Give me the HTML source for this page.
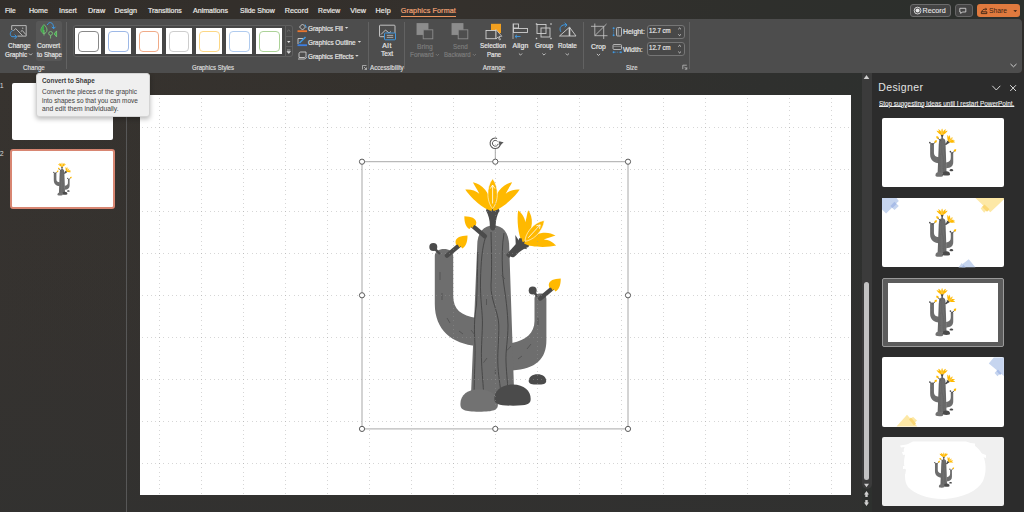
<!DOCTYPE html>
<html><head><meta charset="utf-8"><style>
*{margin:0;padding:0;box-sizing:border-box}
html,body{width:1024px;height:512px;overflow:hidden;background:#2e2c2a;font-family:"Liberation Sans",sans-serif}
.a{position:absolute}
.t{position:absolute;white-space:nowrap;line-height:1;font-family:"Liberation Sans",sans-serif;-webkit-text-stroke:0.2px currentColor}
svg{position:absolute;overflow:visible}
</style></head><body>

<div class='a' style='left:0;top:0;width:1024px;height:19px;background:linear-gradient(90deg,#322e2a 0%,#34302c 45%,#2e2f2c 75%,#2b2f2c 100%)'></div>
<div class='a' style='left:401px;top:16px;width:54.5px;height:1.2px;background:#e9935e'></div>
<div class='a' style='left:909.75px;top:4px;width:41.25px;height:13px;border:1px solid #6c6c6c;border-radius:3px;background:#444'></div>
<div class='a' style='left:955px;top:4px;width:17.5px;height:13px;border:1px solid #666;border-radius:3px;background:#444'></div>
<div class='a' style='left:977px;top:4px;width:43px;height:13px;border-radius:3px;background:#e07a3e'></div>
<div class='a' style='left:0;top:72.5px;width:1024px;height:440px;background:linear-gradient(90deg,#37332f 0%,#34312d 40%,#2f302e 75%,#2b302e 100%)'></div>
<div class='a' style='left:0;top:72.5px;width:862px;height:440px;background:linear-gradient(180deg,rgba(50,49,48,0) 0%,rgba(50,49,48,0.4) 60%,rgba(49,49,48,0.8) 100%)'></div>
<div class='a' style='left:0;top:19px;width:1021.6px;height:53.5px;background:#4d4d4d;border-radius:0 4px 4px 0'></div>
<div class='a' style='left:125.6px;top:72.5px;width:1.8px;height:440px;background:#575757'></div>
<div class='a' style='left:862px;top:72.5px;width:10px;height:416.5px;background:#3b3b3b;border-radius:0 0 5px 5px'></div>
<div class='a' style='left:864px;top:281.5px;width:5.1px;height:198.7px;background:#c2c2c2;border-radius:3px'></div>
<div class='a' style='left:872px;top:72.5px;width:152px;height:440px;background:#2c2c2c'></div>
<div class='a' style='left:140px;top:95px;width:711px;height:400.3px;background:#fff'></div>
<div class='a' style='left:35.6px;top:21.2px;width:26.9px;height:40px;background:#575757;border-radius:2.5px'></div>
<div class='a' style='left:72.5px;top:25.4px;width:220.5px;height:32px;border:1px solid #5f5f5f;border-radius:3px;background:#464646'></div><div class='a' style='left:75px;top:28.1px;width:26px;height:26px;background:#fff'></div><div class='a' style='left:78px;top:31.1px;width:20.5px;height:20.5px;border:1px solid #888888;border-radius:4px'></div><div class='a' style='left:105.25px;top:28.1px;width:26px;height:26px;background:#fff'></div><div class='a' style='left:108.25px;top:31.1px;width:20.5px;height:20.5px;border:1px solid #9db8e6;border-radius:4px'></div><div class='a' style='left:135.5px;top:28.1px;width:26px;height:26px;background:#fff'></div><div class='a' style='left:138.5px;top:31.1px;width:20.5px;height:20.5px;border:1px solid #f0ab88;border-radius:4px'></div><div class='a' style='left:165.9px;top:28.1px;width:26px;height:26px;background:#fff'></div><div class='a' style='left:168.9px;top:31.1px;width:20.5px;height:20.5px;border:1px solid #cdcdcd;border-radius:4px'></div><div class='a' style='left:196px;top:28.1px;width:26px;height:26px;background:#fff'></div><div class='a' style='left:199px;top:31.1px;width:20.5px;height:20.5px;border:1px solid #fcd785;border-radius:4px'></div><div class='a' style='left:226px;top:28.1px;width:26px;height:26px;background:#fff'></div><div class='a' style='left:229px;top:31.1px;width:20.5px;height:20.5px;border:1px solid #b0cbee;border-radius:4px'></div><div class='a' style='left:256px;top:28.1px;width:26px;height:26px;background:#fff'></div><div class='a' style='left:259px;top:31.1px;width:20.5px;height:20.5px;border:1px solid #acd298;border-radius:4px'></div><div class='a' style='left:284.5px;top:25.4px;width:8.5px;height:32px;border:1px solid #5f5f5f;border-radius:0 3px 3px 0;background:#4a4a4a'></div><div class='a' style='left:284.5px;top:36px;width:8.5px;height:1px;background:#5f5f5f'></div><div class='a' style='left:284.5px;top:46.3px;width:8.5px;height:1px;background:#5f5f5f'></div>
<div class='a' style='left:646.5px;top:25px;width:38.5px;height:13.6px;border:1px solid #767676;border-radius:3px;background:#484848'></div><div class='a' style='left:646.5px;top:42.3px;width:38.5px;height:13.6px;border:1px solid #767676;border-radius:3px;background:#484848'></div>
<div class='a' style='left:66.2px;top:21.5px;width:1px;height:47.5px;background:#626262'></div><div class='a' style='left:368.1px;top:21.5px;width:1px;height:47.5px;background:#626262'></div><div class='a' style='left:404.4px;top:21.5px;width:1px;height:47.5px;background:#626262'></div><div class='a' style='left:582.5px;top:21.5px;width:1px;height:47.5px;background:#626262'></div><div class='a' style='left:689.0px;top:21.5px;width:1px;height:47.5px;background:#626262'></div>
<div class='a' style='left:12.2px;top:83px;width:100.6px;height:56.7px;background:#fff;border-radius:2px'></div><div class='a' style='left:10.3px;top:149px;width:104.4px;height:60px;border:2px solid #d88672;border-radius:3px;background:#fff'></div>
<div class='a' style='left:882px;top:117.9px;width:121.8px;height:69.2px;background:#fff;border-radius:2px'></div><div class='a' style='left:882px;top:197.9px;width:121.8px;height:69.2px;background:#fff;border-radius:2px'></div><div class='a' style='left:882px;top:277.9px;width:121.8px;height:69.2px;background:#5c5c5c;border:1px solid #9a9a9a;border-radius:2px'></div><div class='a' style='left:887.5px;top:282.8px;width:110.7px;height:58.9px;background:#fff'></div><div class='a' style='left:882px;top:357.4px;width:121.8px;height:69.2px;background:#fff;border-radius:2px'></div><div class='a' style='left:882px;top:437.3px;width:121.8px;height:68.5px;background:#f0f0f0;border-radius:2px'></div>
<svg width='1024' height='512' style='left:0;top:0'><path d='M882,198 L896.6,198 L898.8,201.1 L886.1,213.6 L882,209.5 Z' fill='#c6d5ef'/><path d='M890.3,206 L894.5,201.8 L898.8,206 L894.5,210 Z' fill='#c6d5ef'/><path d='M890.3,206 L894.5,201.8 L896.6,203.9 L892.4,208.1 Z' fill='#a8bce7'/><path d='M975.4,198 L1003.8,198 L1003.8,199.5 L990.3,212.3 Z' fill='#fde8a6'/><path d='M980.7,208.5 L984.2,204.2 L987.8,208.5 L984.2,212.8 Z' fill='#fde8a6'/><path d='M982.2,207 L984.5,204.5 L989.5,209.3 L987,211.8 Z' fill='#fbd774'/><path d='M958.4,267.2 L968.75,259.2 L975.4,267.2 Z' fill='#c6d5ef'/><path d='M958.8,267.2 L961.7,262.9 L965.5,267.2 Z' fill='#c6d5ef'/><path d='M961.5,267.2 L963.5,264.8 L965.5,267.2 Z' fill='#a8bce7'/><path d='M993.8,357.5 L1003.8,357.5 L1003.8,376 L988.8,363.4 Z' fill='#c6d5ef'/><path d='M994.6,373 L997.5,369.8 L1000.5,373 L997.5,376.2 Z' fill='#c6d5ef'/><path d='M996.5,371 L998,369.6 L1001.5,373.5 L1000,375 Z' fill='#a8bce7'/><path d='M896.5,426.6 L907,414.8 L917.3,426.6 Z' fill='#fde8a6'/><path d='M909,420.5 L913,416.7 L917,420.5 L913,424.5 Z' fill='#fde8a6'/><path d='M909,419.5 L911,417.5 L916,423.5 L914,425.5 Z' fill='#fbd774'/><path d='M913,441.5 L966,441.5 C975,444 981,450 984,458 C986.5,466 986,474 983,481 C978,491 963,497.5 945,499 C928,499.5 915,494 908,487 C904,481 905,475 906,470 C903,465 904,460 905,455 C903,450 902,446 913,441.5 Z' fill='#ffffff'/><path d='M900,445.5 L920,442.5 L920,445 L901,447.5 Z M902,452 L916,450 L916,453 L903,455 Z M906,459 L915,458 L915,461 L906,462 Z M903,466 L914,465 L914,468 L903,469 Z M905,474 L916,473 L916,476 L905,477 Z M960,442 L975,443.5 L975,446 L962,445 Z M978,452 L986,455 L986,458 L980,456 Z' fill='#ffffff'/></svg>
<svg width='1024' height='512' style='left:0;top:0'><path d='M11.7,30 L11.7,25.6 L26.2,25.6 L26.2,36.1 L17.5,36.1' fill='none' stroke='#c4c4c4' stroke-width='0.9'/><path d='M13.5,30.8 L15.6,28.5 L22.5,35.6 M20.8,31.3 L22.4,30.6 L25.8,34.5' fill='none' stroke='#c4c4c4' stroke-width='0.9'/><path d='M22.7,27.3 C23.5,28 23.5,29 22.8,29.2 C22.2,29 22.2,28 22.7,27.3 Z' fill='#c4c4c4'/><path d='M12.8,30.4 C10,31.5 9.3,35.5 12,36.7 L16.6,36.7 M14.6,34.6 L16.8,36.7 L14.6,39' fill='none' stroke='#3e97e0' stroke-width='1'/><path d='M44,24.6 C42,26.5 41,28.5 41,30 C41,32 42.5,33.3 44,33.5 C45.5,33.3 47,32 47,30 C47,28.5 46,26.5 44,24.6 Z' fill='none' stroke='#7fd07f' stroke-width='0.8'/><path d='M44,24.8 C42,26.5 41.3,28.5 41.3,30 C41.3,32 42.5,33.2 44,33.3 Z' fill='#3ea84a'/><path d='M44,30 L44,35.5' stroke='#7fd07f' stroke-width='0.8'/><path d='M47.3,25 C48,23 49.5,22.5 50.5,22.6 C52.5,22.8 53.6,25 53.6,28.6 M51.8,26.8 L53.6,28.8 L55.4,26.8' fill='none' stroke='#3e97e0' stroke-width='1'/><circle cx='50.6' cy='33.4' r='1.9' fill='none' stroke='#7fd07f' stroke-width='0.8'/><path d='M50.6,35.3 L50.6,38.5' stroke='#7fd07f' stroke-width='0.8'/><path d='M56.6,30.9 L54.1,33.9 L56.6,36.9 Z' fill='#3ea84a' stroke='#7fd07f' stroke-width='0.7'/><path d='M287,31.5 L288.7,30 L290.4,31.5' fill='none' stroke='#777' stroke-width='0.8'/><path d='M287,41 L290.5,41 L288.75,43 Z' fill='#dcdcdc'/><path d='M287,50 L290.5,50 M287,51.5 L290.5,51.5 L288.75,53.5 Z' fill='#dcdcdc' stroke='#dcdcdc' stroke-width='0.6'/><path d='M299.5,27 L302.5,24 L305.5,27 L302.5,30 Z' fill='none' stroke='#cfcfcf' stroke-width='0.9'/><path d='M305,24.5 L306.5,27.5' stroke='#3e97e0' stroke-width='1'/><rect x='297.5' y='30.3' width='9.5' height='1.8' fill='#e8762f'/><path d='M298,44 L298,38.5 L303,38.5' fill='none' stroke='#cfcfcf' stroke-width='0.9'/><path d='M299.5,43 L305.5,37' stroke='#3e97e0' stroke-width='1.6'/><rect x='297.5' y='44.3' width='9.5' height='1.8' fill='#3d7ee0'/><path d='M299,57.5 L299,53.5 C299,52.5 300,52 301,52 L306,52 L306,56 C306,57 305,57.5 304,57.5 Z M298,59 L304,59 C305.5,59 306.5,58 306.5,57' fill='none' stroke='#cfcfcf' stroke-width='0.9'/><path d='M344.90000000000003,27.0 L348.3,27.0 L346.6,28.8 Z' fill='#dcdcdc'/><path d='M357.7,41.0 L361.09999999999997,41.0 L359.4,42.8 Z' fill='#dcdcdc'/><path d='M355.2,55.0 L358.59999999999997,55.0 L356.9,56.8 Z' fill='#dcdcdc'/><path d='M518.9,53.5 L520.5,55.099999999999994 L522.1,53.5' fill='none' stroke='#dcdcdc' stroke-width='0.8'/><path d='M542.4,53.5 L544,55.099999999999994 L545.6,53.5' fill='none' stroke='#dcdcdc' stroke-width='0.8'/><path d='M565.8,53.5 L567.4,55.099999999999994 L569.0,53.5' fill='none' stroke='#dcdcdc' stroke-width='0.8'/><path d='M596.9,53.900000000000006 L598.5,55.5 L600.1,53.900000000000006' fill='none' stroke='#dcdcdc' stroke-width='0.8'/><path d='M29.0,53.5 L30.6,55.099999999999994 L32.2,53.5' fill='none' stroke='#dcdcdc' stroke-width='0.8'/><path d='M435.79999999999995,54.0 L437.4,55.599999999999994 L439.0,54.0' fill='none' stroke='#7c7c7c' stroke-width='0.8'/><path d='M472.79999999999995,54.0 L474.4,55.599999999999994 L476.0,54.0' fill='none' stroke='#7c7c7c' stroke-width='0.8'/><path d='M362.5,69.5 L362.5,65.5 L366.5,65.5' fill='none' stroke='#bdbdbd' stroke-width='0.8'/><path d='M364.0,67.0 L366.5,69.5 M366.5,67.5 L366.5,69.5 L364.5,69.5' fill='none' stroke='#bdbdbd' stroke-width='0.8'/><path d='M682.8,69.2 L682.8,65.2 L686.8,65.2' fill='none' stroke='#bdbdbd' stroke-width='0.8'/><path d='M684.3,66.7 L686.8,69.2 M686.8,67.2 L686.8,69.2 L684.8,69.2' fill='none' stroke='#bdbdbd' stroke-width='0.8'/><rect x='379.5' y='25.2' width='15.5' height='11.5' rx='0.8' fill='none' stroke='#cfcfcf' stroke-width='0.9'/><path d='M381,34.5 L385.5,30 L389,33 L391,31.5' fill='none' stroke='#cfcfcf' stroke-width='0.9'/><rect x='384.5' y='33' width='11' height='6.8' rx='0.8' fill='#4e4e4e' stroke='#3e97e0' stroke-width='1'/><path d='M386.8,35.4 L393.2,35.4 M386.8,37.4 L393.2,37.4' stroke='#cfcfcf' stroke-width='0.7'/><rect x='417' y='23.6' width='11' height='11' fill='#8c8c8c' stroke='#8c8c8c' stroke-width='0.9'/><rect x='423.2' y='29.8' width='9.6' height='9' fill='#4e4e4e' stroke='#8c8c8c' stroke-width='0.9'/><rect x='452' y='23.6' width='11' height='11' fill='#8c8c8c' stroke='#8c8c8c' stroke-width='0.9'/><rect x='458.2' y='29.8' width='9.6' height='9' fill='#4e4e4e' stroke='#8c8c8c' stroke-width='0.9'/><rect x='491' y='23.8' width='10' height='9.3' fill='#f2a020'/><rect x='486' y='30.5' width='10' height='8.2' fill='#4e4e4e' stroke='#cfcfcf' stroke-width='0.9'/><path d='M496,29.5 L496,39 L498,37 L499.5,40 L500.5,39.5 L499,36.5 L501.8,36.3 Z' fill='#4e4e4e' stroke='#cfcfcf' stroke-width='0.8'/><path d='M513,23.5 L513,39' stroke='#9a9a9a' stroke-width='1.2'/><rect x='513.5' y='24' width='5' height='4' fill='none' stroke='#cfcfcf' stroke-width='0.9'/><rect x='513.5' y='28.5' width='14' height='4' fill='none' stroke='#cfcfcf' stroke-width='0.9'/><path d='M515,36.5 L520.5,36.5 M515,36.5 L517,34.8 M515,36.5 L517,38.2' fill='none' stroke='#3e97e0' stroke-width='0.9'/><rect x='537' y='24.5' width='9' height='9' fill='none' stroke='#cfcfcf' stroke-width='0.9'/><rect x='541' y='28' width='9' height='9' fill='none' stroke='#cfcfcf' stroke-width='0.9'/><rect x='535.8' y='23.3' width='1.4' height='1.4' fill='#cfcfcf'/><rect x='550.3' y='23.3' width='1.4' height='1.4' fill='#cfcfcf'/><rect x='535.8' y='37.8' width='1.4' height='1.4' fill='#cfcfcf'/><rect x='550.3' y='37.8' width='1.4' height='1.4' fill='#cfcfcf'/><path d='M559.5,36 L576,36 L569.5,27.2 Z' fill='none' stroke='#cfcfcf' stroke-width='0.9'/><path d='M569.5,27.5 L569.5,36' stroke='#cfcfcf' stroke-width='1.6'/><path d='M560.8,31.8 C558.5,27.5 561.5,24.2 566.8,24.8 M564.6,22.8 L567,24.9 L564.8,27' fill='none' stroke='#3e97e0' stroke-width='1'/><path d='M594.8,23.5 L594.8,35.7 L607.5,35.7 M591,26.3 L603.7,26.3 L603.7,39 M594.8,35.7 L606.5,24' fill='none' stroke='#c8c8c8' stroke-width='0.8'/><rect x='616.5' y='27.5' width='5' height='8.5' rx='1' fill='none' stroke='#cfcfcf' stroke-width='0.8'/><path d='M618.2,28 L618.2,35.5' stroke='#cfcfcf' stroke-width='0.5'/><path d='M613.6,28 L613.6,35.5' stroke='#3e97e0' stroke-width='0.7' stroke-dasharray='1 0.8'/><circle cx='613.6' cy='28.2' r='1' fill='#3e97e0'/><circle cx='613.6' cy='35.3' r='1' fill='#3e97e0'/><rect x='613' y='44.5' width='8.5' height='5' rx='1' fill='none' stroke='#cfcfcf' stroke-width='0.8'/><path d='M613.5,46.3 L621,46.3' stroke='#cfcfcf' stroke-width='0.5'/><path d='M613.5,52.2 L621,52.2' stroke='#3e97e0' stroke-width='0.7' stroke-dasharray='1 0.8'/><circle cx='613.6' cy='52.2' r='1' fill='#3e97e0'/><circle cx='620.9' cy='52.2' r='1' fill='#3e97e0'/><path d='M678.3,29.2 L679.6,28 L680.9,29.2 M678.3,34.4 L679.6,35.6 L680.9,34.4' fill='none' stroke='#e0e0e0' stroke-width='0.85'/><path d='M678.3,46.5 L679.6,45.3 L680.9,46.5 M678.3,51.699999999999996 L679.6,52.9 L680.9,51.699999999999996' fill='none' stroke='#e0e0e0' stroke-width='0.85'/><path d='M1010.5,64 L1013.5,66.8 L1016.5,64' fill='none' stroke='#d0d0d0' stroke-width='1'/><circle cx='917.6' cy='10.6' r='3.4' fill='none' stroke='#e0e0e0' stroke-width='0.9'/><circle cx='917.6' cy='10.6' r='2' fill='#e8e8e8'/><path d='M959.8,8.3 L965.8,8.3 L965.8,12 L962.3,12 L960.8,13.5 L960.8,12 L959.8,12 Z' fill='none' stroke='#e0e0e0' stroke-width='0.8'/><path d='M981.3,13.6 L986.8,13.6 L986.8,11.8 L981.3,11.8 Z M982,11.8 C982,10 983.5,9.2 985,9.2 L986.5,9.2 M985.5,8.3 L986.7,9.2 L985.5,10.1' fill='none' stroke='#2a1a10' stroke-width='0.8'/><path d='M1013.4,10.2 L1017.1,10.2 L1015.25,11.9 Z' fill='#2a1a10'/></svg>
<svg width='1024' height='512' style='left:0;top:0'><defs><g id='cac'><path fill='#6e6e6e' d='M434.8,256 C434.8,251.5 439,249 444,249 C449,249 453.2,251.5 453.2,256 L453.2,296 C453.2,309 461,316 477,318 L477,346 C452,344 434.8,330 434.8,304 Z'/>
<path fill='#6e6e6e' d='M534.5,299 C534.5,295.5 537,293.5 540.4,293.5 C543.8,293.5 546.4,295.5 546.4,299 L546.4,340 C546.4,359 536,369 512,370.5 L512,343 C526,340 534.5,333 534.5,321 Z'/>
<path fill='#6e6e6e' d='M477.2,246 C477.2,232 484,225.4 493.2,225.4 C502.5,225.4 509.2,232 509.2,246 L514.2,395 L471,395 Z'/>
<path fill='none' stroke='#474747' stroke-width='1' d='M477.8,252 C477.5,275 477,295 476.5,305 C474,318 474.2,330 475,345 C475.5,360 474,375 474.2,395'/>
<path fill='none' stroke='#474747' stroke-width='1' d='M485.6,237 C482,248 481,262 480.5,280 C480,300 482.8,312 482.4,325 C482,340 481,350 481.6,362 C482,375 483.5,385 483.5,395'/>
<path fill='none' stroke='#474747' stroke-width='1' d='M491,232 C491.5,250 492,270 491,285 C490.5,300 498.5,312 498.8,325 C499,340 497.5,350 497.8,362 C498,375 500.5,385 500.9,395'/>
<path fill='none' stroke='#474747' stroke-width='1' d='M504,233 C502,245 502,258 502.5,270 C503,285 507,298 508,325 C508,340 505.5,350 506,362 C506.5,375 508,385 508,395'/>
<line x1='501.6' y1='275.4' x2='505' y2='279' stroke='#4f4f4f' stroke-width='0.8'/>
<line x1='471' y1='330' x2='475' y2='335' stroke='#4f4f4f' stroke-width='0.8'/>
<line x1='483.5' y1='362.7' x2='487' y2='358' stroke='#4f4f4f' stroke-width='0.8'/>
<line x1='486.5' y1='299' x2='486.5' y2='305' stroke='#4f4f4f' stroke-width='0.8'/>
<line x1='495.4' y1='369.9' x2='495.4' y2='374' stroke='#4f4f4f' stroke-width='0.8'/>
<line x1='507' y1='350.4' x2='511' y2='346' stroke='#4f4f4f' stroke-width='0.8'/>
<line x1='440' y1='272' x2='440' y2='280' stroke='#4f4f4f' stroke-width='0.8'/>
<line x1='442' y1='293' x2='442' y2='300' stroke='#4f4f4f' stroke-width='0.8'/>
<line x1='447' y1='318' x2='450' y2='323' stroke='#4f4f4f' stroke-width='0.8'/>
<line x1='459' y1='331' x2='463' y2='334' stroke='#4f4f4f' stroke-width='0.8'/>
<line x1='538' y1='318' x2='538' y2='325' stroke='#4f4f4f' stroke-width='0.8'/>
<line x1='531' y1='344' x2='527' y2='349' stroke='#4f4f4f' stroke-width='0.8'/>
<line x1='522' y1='356' x2='518' y2='359' stroke='#4f4f4f' stroke-width='0.8'/>
<path fill='#727272' d='M460.4,404 C460.4,394.5 468,389.3 479,389.3 C490,389.3 497.9,395 497.9,404.5 C497.9,410 494,411.7 479,411.7 C464,411.7 460.4,410 460.4,404 Z'/>
<path fill='#4b4b4b' d='M494.3,399 C494.3,390 502,384.6 513,384.6 C524,384.6 530.7,391 530.7,399 C530.7,404 527,405.7 513,405.7 C499,405.7 494.3,404 494.3,399 Z'/>
<path fill='#4b4b4b' d='M528.7,381 C528.7,377 532.5,374.3 537.5,374.3 C542.5,374.3 546.2,377 546.2,381 C546.2,384 543,384.6 537.5,384.6 C532,384.6 528.7,384 528.7,381 Z'/>
<circle cx='433.3' cy='247.1' r='4' fill='#4b4b4b'/>
<path fill='#4b4b4b' d='M433.01,248.99 L439.29,254.71 L440.71,253.29 L434.99,247.01Z'/>
<circle cx='532.7' cy='290.5' r='4' fill='#4b4b4b'/>
<path fill='#4b4b4b' d='M531.92,291.89 L536.73,297.13 L538.27,295.87 L534.08,290.11Z'/>
<g transform='translate(492.5,209.5)'><path fill='#4b4b4b' d='M-6.5,1 L-5,-3 L-2.5,0 L0,-4 L2.5,0 L5,-3 L7,1 C4.5,5.5 3.2,10.5 3.2,16.5 C3.2,22.5 -2.6,22.5 -2.6,16.5 C-2.6,10.5 -4,5.5 -6.5,1 Z'/><path fill='#FFB900' d='M-1,1.5 C-9,0 -22.5,-12.5 -27.2,-19.9 C-22.5,-20.5 -16.5,-19 -13.2,-15.8 C-15.5,-20.5 -18.5,-24.5 -19.6,-27.2 C-10.5,-25.5 -2.5,-17.5 0,-1 Z'/><path fill='#FFB900' d='M1,1.5 C9,0 22.5,-12.5 27.2,-19.9 C22.5,-20.5 16.5,-19 13.2,-15.8 C15.5,-20.5 18.5,-24.5 19.6,-27.2 C10.5,-25.5 2.5,-17.5 0,-1 Z'/><path fill='#FFB900' stroke='#fff' stroke-width='0.6' d='M0.1,-30.8 C3.5,-26.5 5,-21 4.8,-14 C4.5,-8 2,-3 0.1,-1 C-1.8,-3 -4.3,-8 -4.6,-14 C-4.8,-21 -3.3,-26.5 0.1,-30.8 Z'/><path fill='none' stroke='#fff' stroke-width='0.8' d='M0.1,-24.5 L0.1,-6 M-2.2,-21 L0.1,-24.5 L2.4,-21'/></g>
<g transform='translate(524.3,241.9) rotate(42.8) scale(0.95)'><path fill='#4b4b4b' d='M-6.5,1 L-5,-3 L-2.5,0 L0,-4 L2.5,0 L5,-3 L7,1 C4.5,5.5 3.2,10.5 3.2,16.5 C3.2,22.5 -2.6,22.5 -2.6,16.5 C-2.6,10.5 -4,5.5 -6.5,1 Z'/><path fill='#FFB900' d='M-1,1.5 C-9,0 -22.5,-12.5 -27.2,-19.9 C-22.5,-20.5 -16.5,-19 -13.2,-15.8 C-15.5,-20.5 -18.5,-24.5 -19.6,-27.2 C-10.5,-25.5 -2.5,-17.5 0,-1 Z'/><path fill='#FFB900' d='M1,1.5 C9,0 22.5,-12.5 27.2,-19.9 C22.5,-20.5 16.5,-19 13.2,-15.8 C15.5,-20.5 18.5,-24.5 19.6,-27.2 C10.5,-25.5 2.5,-17.5 0,-1 Z'/><path fill='#FFB900' stroke='#fff' stroke-width='0.6' d='M0.1,-30.8 C3.5,-26.5 5,-21 4.8,-14 C4.5,-8 2,-3 0.1,-1 C-1.8,-3 -4.3,-8 -4.6,-14 C-4.8,-21 -3.3,-26.5 0.1,-30.8 Z'/><path fill='none' stroke='#fff' stroke-width='0.8' d='M0.1,-24.5 L0.1,-6 M-2.2,-21 L0.1,-24.5 L2.4,-21'/></g>
<path fill='#4b4b4b' d='M509.02,257.95 L520.88,246.30 L517.12,242.70 L505.98,255.05Z'/>
<path fill='#4b4b4b' d='M515.3,235 L518.8,240.5 L521.5,238 L522.8,243.5 L527.2,249.3 L520.5,247.8 L516,250.5 Z'/>
<g transform='translate(459,245.5)'><path fill='#4b4b4b' stroke='#4b4b4b' stroke-width='4.4' stroke-linecap='round' d='M0,0 L-12,10.1'/><path fill='#FFB900' d='M-3.5,-3.5 C-3,-8 1.5,-9.7 8.5,-9.9 C8.6,-3 6.5,1.5 3.2,3 L1.5,0.5 L0.5,2 L-1.3,-1 L-3,-0.5 Z'/></g>
<g transform='translate(552.25,288.4)'><path fill='#4b4b4b' stroke='#4b4b4b' stroke-width='4.4' stroke-linecap='round' d='M0,0 L-12,10.1'/><path fill='#FFB900' d='M-3.5,-3.5 C-3,-8 1.5,-9.7 8.5,-9.9 C8.6,-3 6.5,1.5 3.2,3 L1.5,0.5 L0.5,2 L-1.3,-1 L-3,-0.5 Z'/></g>
<g transform='translate(472.85,226.1) scale(-1,1)'><path fill='#4b4b4b' stroke='#4b4b4b' stroke-width='4.4' stroke-linecap='round' d='M0,0 L-12,10.1'/><path fill='#FFB900' d='M-3.5,-3.5 C-3,-8 1.5,-9.7 8.5,-9.9 C8.6,-3 6.5,1.5 3.2,3 L1.5,0.5 L0.5,2 L-1.3,-1 L-3,-0.5 Z'/></g></g></defs><use href='#cac' transform='translate(495.5,295) scale(1) translate(-495.5,-295)'/><g stroke='rgba(152,152,152,0.4)' stroke-width='1' stroke-dasharray='1 3.2' shape-rendering='crispEdges'><line x1='159.5' y1='95' x2='159.5' y2='495' stroke-dashoffset='1.5'/><line x1='201.5' y1='95' x2='201.5' y2='495' stroke-dashoffset='1.5'/><line x1='243.5' y1='95' x2='243.5' y2='495' stroke-dashoffset='1.5'/><line x1='285.5' y1='95' x2='285.5' y2='495' stroke-dashoffset='1.5'/><line x1='327.5' y1='95' x2='327.5' y2='495' stroke-dashoffset='1.5'/><line x1='369.5' y1='95' x2='369.5' y2='495' stroke-dashoffset='1.5'/><line x1='411.5' y1='95' x2='411.5' y2='495' stroke-dashoffset='1.5'/><line x1='453.5' y1='95' x2='453.5' y2='495' stroke-dashoffset='1.5'/><line x1='495.5' y1='95' x2='495.5' y2='495' stroke-dashoffset='1.5'/><line x1='537.5' y1='95' x2='537.5' y2='495' stroke-dashoffset='1.5'/><line x1='579.5' y1='95' x2='579.5' y2='495' stroke-dashoffset='1.5'/><line x1='621.5' y1='95' x2='621.5' y2='495' stroke-dashoffset='1.5'/><line x1='663.5' y1='95' x2='663.5' y2='495' stroke-dashoffset='1.5'/><line x1='705.5' y1='95' x2='705.5' y2='495' stroke-dashoffset='1.5'/><line x1='747.5' y1='95' x2='747.5' y2='495' stroke-dashoffset='1.5'/><line x1='789.5' y1='95' x2='789.5' y2='495' stroke-dashoffset='1.5'/><line x1='831.5' y1='95' x2='831.5' y2='495' stroke-dashoffset='1.5'/><line x1='140' y1='127.0' x2='851' y2='127.0' stroke-dashoffset='1.8'/><line x1='140' y1='169.0' x2='851' y2='169.0' stroke-dashoffset='1.8'/><line x1='140' y1='211.0' x2='851' y2='211.0' stroke-dashoffset='1.8'/><line x1='140' y1='253.0' x2='851' y2='253.0' stroke-dashoffset='1.8'/><line x1='140' y1='295.0' x2='851' y2='295.0' stroke-dashoffset='1.8'/><line x1='140' y1='337.0' x2='851' y2='337.0' stroke-dashoffset='1.8'/><line x1='140' y1='379.0' x2='851' y2='379.0' stroke-dashoffset='1.8'/><line x1='140' y1='421.0' x2='851' y2='421.0' stroke-dashoffset='1.8'/><line x1='140' y1='463.0' x2='851' y2='463.0' stroke-dashoffset='1.8'/></g><rect x='362' y='161.7' width='266' height='267.2' fill='none' stroke='#a8a8a8' stroke-width='1'/><line x1='495.3' y1='148' x2='495.3' y2='161.7' stroke='#a8a8a8' stroke-width='1'/><circle cx='362' cy='161.7' r='2.6' fill='#fff' stroke='#5a5a5a' stroke-width='1'/><circle cx='495.3' cy='161.7' r='2.6' fill='#fff' stroke='#5a5a5a' stroke-width='1'/><circle cx='628' cy='161.7' r='2.6' fill='#fff' stroke='#5a5a5a' stroke-width='1'/><circle cx='362' cy='295.3' r='2.6' fill='#fff' stroke='#5a5a5a' stroke-width='1'/><circle cx='628' cy='295.3' r='2.6' fill='#fff' stroke='#5a5a5a' stroke-width='1'/><circle cx='362' cy='428.9' r='2.6' fill='#fff' stroke='#5a5a5a' stroke-width='1'/><circle cx='495.3' cy='428.9' r='2.6' fill='#fff' stroke='#5a5a5a' stroke-width='1'/><circle cx='628' cy='428.9' r='2.6' fill='#fff' stroke='#5a5a5a' stroke-width='1'/><path d='M500.32,141.95 A5.2,5.2 0 1 1 497.08,138.41' fill='none' stroke='#5a5a5a' stroke-width='1.1'/><path d='M498.16,143.80 A2.9,2.9 0 1 1 497.52,141.44' fill='none' stroke='#5a5a5a' stroke-width='1'/><path d='M498.5,141.2 L503.6,142.3 L499.8,146 Z' fill='#5a5a5a'/><use href='#cac' transform='translate(62.4,179) scale(0.142) translate(-495.5,-295)'/><use href='#cac' transform='translate(942.7,152.6) scale(0.207) translate(-495.5,-295)'/><use href='#cac' transform='translate(942.7,232.6) scale(0.207) translate(-495.5,-295)'/><use href='#cac' transform='translate(942.7,312.0) scale(0.207) translate(-495.5,-295)'/><use href='#cac' transform='translate(942.7,392.0) scale(0.207) translate(-495.5,-295)'/><use href='#cac' transform='translate(944.2,469.9) scale(0.152) translate(-495.5,-295)'/></svg>
<svg width='1024' height='512' style='left:0;top:0'>
<path d='M863.7,79 L869.3,79 L866.5,75.1 Z' fill='#cfcfcf'/>
<path d='M864,483.7 L869,483.7 L866.5,487.2 Z' fill='#cfcfcf'/>
<path d='M864,494.5 L869,494.5 L866.5,491 Z M865.3,494.5 L867.7,494.5 L867.7,497 L865.3,497 Z' fill='#cfcfcf'/>
<path d='M864,502.5 L869,502.5 L866.5,506 Z M865.3,502.5 L867.7,502.5 L867.7,500 L865.3,500 Z' fill='#cfcfcf'/>
<path d='M992.3,85.8 L996.3,90 L1000.3,85.8' fill='none' stroke='#d8d8d8' stroke-width='1'/>
<path d='M1010.2,85.2 L1016,91 M1016,85.2 L1010.2,91' fill='none' stroke='#d8d8d8' stroke-width='1'/>
</svg>

<div class='a' style='left:35.8px;top:72.9px;width:114.2px;height:44.2px;background:#efefef;border:1px solid #d4d4d4;border-radius:3px;box-shadow:0 2px 5px rgba(0,0,0,0.28)'></div>

<div id='txt'><div class='t' style='left:4.87px;top:7.01px;font-size:7.2px;color:#ebe9e6;font-weight:400;letter-spacing:0.000px;transform:scaleX(0.920);transform-origin:0 0;'>File</div>
<div class='t' style='left:29.45px;top:7.01px;font-size:7.2px;color:#ebe9e6;font-weight:400;letter-spacing:0.000px;transform:scaleX(0.986);transform-origin:0 0;'>Home</div>
<div class='t' style='left:59.44px;top:7.01px;font-size:7.2px;color:#ebe9e6;font-weight:400;letter-spacing:0.000px;transform:scaleX(0.990);transform-origin:0 0;'>Insert</div>
<div class='t' style='left:88.04px;top:7.01px;font-size:7.2px;color:#ebe9e6;font-weight:400;letter-spacing:0.113px;'>Draw</div>
<div class='t' style='left:114.44px;top:7.01px;font-size:7.2px;color:#ebe9e6;font-weight:400;letter-spacing:0.029px;'>Design</div>
<div class='t' style='left:147.75px;top:7.01px;font-size:7.2px;color:#ebe9e6;font-weight:400;letter-spacing:0.000px;transform:scaleX(0.969);transform-origin:0 0;'>Transitions</div>
<div class='t' style='left:193.25px;top:7.01px;font-size:7.2px;color:#ebe9e6;font-weight:400;letter-spacing:0.000px;transform:scaleX(0.982);transform-origin:0 0;'>Animations</div>
<div class='t' style='left:240.15px;top:7.01px;font-size:7.2px;color:#ebe9e6;font-weight:400;letter-spacing:0.000px;transform:scaleX(0.965);transform-origin:0 0;'>Slide Show</div>
<div class='t' style='left:284.64px;top:7.01px;font-size:7.2px;color:#ebe9e6;font-weight:400;letter-spacing:0.070px;'>Record</div>
<div class='t' style='left:318.26px;top:7.01px;font-size:7.2px;color:#ebe9e6;font-weight:400;letter-spacing:0.000px;transform:scaleX(0.941);transform-origin:0 0;'>Review</div>
<div class='t' style='left:350.34px;top:7.01px;font-size:7.2px;color:#ebe9e6;font-weight:400;letter-spacing:0.022px;'>View</div>
<div class='t' style='left:375.44px;top:7.01px;font-size:7.2px;color:#ebe9e6;font-weight:400;letter-spacing:0.208px;'>Help</div>
<div class='t' style='left:400.74px;top:7.01px;font-size:7.2px;color:#f0a274;font-weight:400;letter-spacing:0.113px;'>Graphics Format</div>
<div class='t' style='left:922.54px;top:7.01px;font-size:7.2px;color:#e8e8e8;font-weight:400;letter-spacing:0.010px;-webkit-text-stroke:0.1px currentColor;'>Record</div>
<div class='t' style='left:989.46px;top:7.01px;font-size:7.2px;color:#3a2314;font-weight:400;letter-spacing:0.000px;transform:scaleX(0.937);transform-origin:0 0;-webkit-text-stroke:0;'>Share</div>
<div class='t' style='left:7.78px;top:43.27px;font-size:6.9px;color:#e6e6e6;font-weight:400;letter-spacing:0.000px;transform:scaleX(0.934);transform-origin:0 0;'>Change</div>
<div class='t' style='left:4.68px;top:51.77px;font-size:6.9px;color:#e6e6e6;font-weight:400;letter-spacing:0.000px;transform:scaleX(0.917);transform-origin:0 0;'>Graphic</div>
<div class='t' style='left:37.17px;top:43.27px;font-size:6.9px;color:#e6e6e6;font-weight:400;letter-spacing:0.000px;transform:scaleX(0.959);transform-origin:0 0;'>Convert</div>
<div class='t' style='left:36.59px;top:51.77px;font-size:6.9px;color:#e6e6e6;font-weight:400;letter-spacing:0.000px;transform:scaleX(0.907);transform-origin:0 0;'>to Shape</div>
<div class='t' style='left:22.69px;top:65.08px;font-size:6.3px;color:#dadada;font-weight:400;letter-spacing:0.000px;transform:scaleX(0.989);transform-origin:0 0;'>Change</div>
<div class='t' style='left:192.40px;top:65.08px;font-size:6.3px;color:#dadada;font-weight:400;letter-spacing:0.000px;transform:scaleX(0.955);transform-origin:0 0;'>Graphics Styles</div>
<div class='t' style='left:308.08px;top:25.00px;font-size:7.4px;color:#e6e6e6;font-weight:400;letter-spacing:-0.028px;transform:scaleX(0.860);transform-origin:0 0;'>Graphics Fill</div>
<div class='t' style='left:308.08px;top:39.00px;font-size:7.4px;color:#e6e6e6;font-weight:400;letter-spacing:0.000px;transform:scaleX(0.865);transform-origin:0 0;'>Graphics Outline</div>
<div class='t' style='left:308.08px;top:53.00px;font-size:7.4px;color:#e6e6e6;font-weight:400;letter-spacing:-0.069px;transform:scaleX(0.860);transform-origin:0 0;'>Graphics Effects</div>
<div class='t' style='left:382.15px;top:42.97px;font-size:6.9px;color:#e6e6e6;font-weight:400;letter-spacing:0.572px;'>Alt</div>
<div class='t' style='left:380.87px;top:51.37px;font-size:6.9px;color:#e6e6e6;font-weight:400;letter-spacing:0.000px;transform:scaleX(0.962);transform-origin:0 0;'>Text</div>
<div class='t' style='left:369.59px;top:65.08px;font-size:6.3px;color:#dadada;font-weight:400;letter-spacing:0.000px;transform:scaleX(0.983);transform-origin:0 0;'>Accessibility</div>
<div class='t' style='left:417.46px;top:43.77px;font-size:6.9px;color:#7c7c7c;font-weight:400;letter-spacing:0.000px;transform:scaleX(0.974);transform-origin:0 0;'>Bring</div>
<div class='t' style='left:410.28px;top:52.17px;font-size:6.9px;color:#7c7c7c;font-weight:400;letter-spacing:0.000px;transform:scaleX(0.935);transform-origin:0 0;'>Forward</div>
<div class='t' style='left:452.69px;top:43.77px;font-size:6.9px;color:#7c7c7c;font-weight:400;letter-spacing:-0.000px;transform:scaleX(0.909);transform-origin:0 0;'>Send</div>
<div class='t' style='left:443.50px;top:52.17px;font-size:6.9px;color:#7c7c7c;font-weight:400;letter-spacing:0.000px;transform:scaleX(0.879);transform-origin:0 0;'>Backward</div>
<div class='t' style='left:480.28px;top:43.37px;font-size:6.9px;color:#e6e6e6;font-weight:400;letter-spacing:0.000px;transform:scaleX(0.918);transform-origin:0 0;'>Selection</div>
<div class='t' style='left:486.50px;top:51.87px;font-size:6.9px;color:#e6e6e6;font-weight:400;letter-spacing:0.000px;transform:scaleX(0.876);transform-origin:0 0;'>Pane</div>
<div class='t' style='left:482.69px;top:65.08px;font-size:6.3px;color:#dadada;font-weight:400;letter-spacing:0.037px;'>Arrange</div>
<div class='t' style='left:512.45px;top:43.37px;font-size:6.9px;color:#e6e6e6;font-weight:400;letter-spacing:0.140px;'>Align</div>
<div class='t' style='left:534.67px;top:43.37px;font-size:6.9px;color:#e6e6e6;font-weight:400;letter-spacing:0.000px;transform:scaleX(0.953);transform-origin:0 0;'>Group</div>
<div class='t' style='left:558.48px;top:43.37px;font-size:6.9px;color:#e6e6e6;font-weight:400;letter-spacing:0.000px;transform:scaleX(0.928);transform-origin:0 0;'>Rotate</div>
<div class='t' style='left:591.46px;top:43.87px;font-size:6.9px;color:#e6e6e6;font-weight:400;letter-spacing:0.000px;transform:scaleX(0.990);transform-origin:0 0;'>Crop</div>
<div class='t' style='left:622.65px;top:29.26px;font-size:7.1px;color:#e6e6e6;font-weight:400;letter-spacing:0.000px;transform:scaleX(0.976);transform-origin:0 0;'>Height:</div>
<div class='t' style='left:622.65px;top:47.36px;font-size:7.1px;color:#e6e6e6;font-weight:400;letter-spacing:0.000px;transform:scaleX(0.979);transform-origin:0 0;'>Width:</div>
<div class='t' style='left:648.70px;top:27.97px;font-size:6.7px;color:#e6e6e6;font-weight:400;letter-spacing:0.000px;transform:scaleX(0.908);transform-origin:0 0;'>12.7 cm</div>
<div class='t' style='left:648.70px;top:44.97px;font-size:6.7px;color:#e6e6e6;font-weight:400;letter-spacing:0.000px;transform:scaleX(0.908);transform-origin:0 0;'>12.7 cm</div>
<div class='t' style='left:625.70px;top:65.08px;font-size:6.3px;color:#dadada;font-weight:400;letter-spacing:0.000px;transform:scaleX(0.947);transform-origin:0 0;'>Size</div>
<div class='t' style='left:878.18px;top:82.07px;font-size:10.5px;color:#e4e4e4;font-weight:400;letter-spacing:0.403px;-webkit-text-stroke:0;'>Designer</div>
<div class='t' style='left:878.68px;top:99.91px;font-size:7.0px;color:#ececec;font-weight:400;letter-spacing:0.000px;transform:scaleX(0.908);transform-origin:0 0;text-decoration:underline;text-underline-offset:0px;-webkit-text-stroke:0.1px currentColor;'>Stop suggesting ideas until I restart PowerPoint.</div>
<div class='t' style='left:41.58px;top:78.12px;font-size:6.8px;color:#3a3a3a;font-weight:700;letter-spacing:0.000px;transform:scaleX(0.937);transform-origin:0 0;-webkit-text-stroke:0;'>Convert to Shape</div>
<div class='t' style='left:41.58px;top:88.77px;font-size:6.9px;color:#464646;font-weight:400;letter-spacing:0.000px;transform:scaleX(0.939);transform-origin:0 0;-webkit-text-stroke:0.05px currentColor;'>Convert the pieces of the graphic</div>
<div class='t' style='left:41.58px;top:97.67px;font-size:6.9px;color:#464646;font-weight:400;letter-spacing:0.000px;transform:scaleX(0.933);transform-origin:0 0;-webkit-text-stroke:0.05px currentColor;'>into shapes so that you can move</div>
<div class='t' style='left:41.56px;top:105.57px;font-size:6.9px;color:#464646;font-weight:400;letter-spacing:0.000px;transform:scaleX(0.972);transform-origin:0 0;-webkit-text-stroke:0.05px currentColor;'>and edit them individually.</div>
<div class='t' style='left:-0.35px;top:81.51px;font-size:7px;color:#d8d8d8;font-weight:400;letter-spacing:0.000px;-webkit-text-stroke:0;'>1</div>
<div class='t' style='left:-0.35px;top:149.51px;font-size:7px;color:#d8d8d8;font-weight:400;letter-spacing:0.000px;-webkit-text-stroke:0;'>2</div></div>

</body></html>
